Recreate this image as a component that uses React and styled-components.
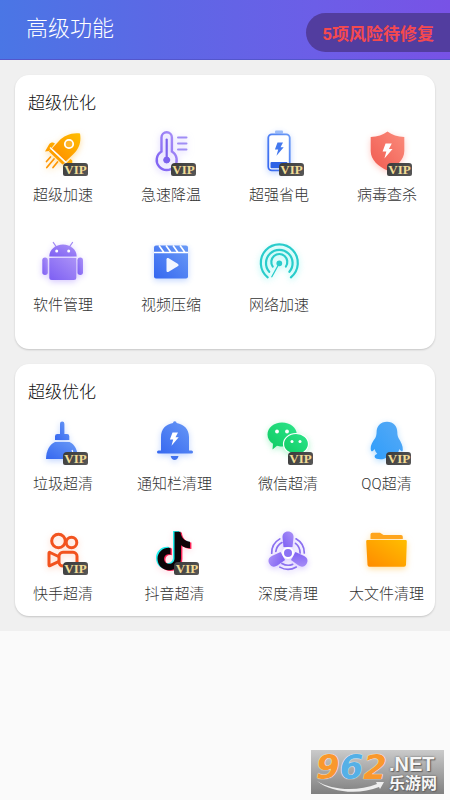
import React from 'react'
import styled, { createGlobalStyle } from 'styled-components'

const GlobalStyle = createGlobalStyle`
* {
    box-sizing: border-box;
}
body {
    margin: 0;
    background: #fafafa;
    font-family: Roboto, 'Noto Sans CJK SC', sans-serif;
    font-weight: 300;
}
`

const Page = styled.div`
position: relative;
min-height: 100vh;
`

const Header = styled.header`
display: flex;
justify-content: space-between;
align-items: flex-start;
padding: 13px 0 7px 26px;
background: linear-gradient(90deg, #4a76e5 0%, #5c68e5 35%, #6c5ee7 70%, #7852e6 100%);
border-bottom: 1px solid #5456cb;
`

const Title = styled.h1`
margin: 0;
font-size: 22px;
line-height: 32px;
font-weight: 300;
color: #fff;
`

const RiskButton = styled.button`
height: 39px;
padding: 0 16px;
border: 0;
border-radius: 20px 0 0 20px;
background: #523d9f;
color: #f5494f;
font-family: inherit;
font-size: 17px;
font-weight: 700;
`

const Content = styled.main`
display: flex;
flex-direction: column;
gap: 15px;
padding: 15px;
background: #f0f0f0;
`

const Card = styled.section`
padding: 15px 0 ${({ $bottom }) => $bottom}px;
border-radius: 14px;
background: #fff;
box-shadow: 0 1px 2px rgba(0, 0, 0, 0.18);
`

const CardTitle = styled.h2`
margin: 0 0 11px;
padding-left: 13px;
font-size: 17px;
line-height: 26px;
font-weight: 300;
color: #111;
`

const Grid = styled.div`
display: grid;
grid-template-columns: ${({ $columns }) => $columns};
justify-content: space-between;
justify-items: center;
row-gap: 32px;
padding: 0 ${({ $inset }) => $inset}px;
`

const Item = styled.button`
display: flex;
flex-direction: column;
align-items: center;
gap: 8px;
padding: 0;
border: 0;
background: none;
color: #333;
font-family: inherit;
font-size: 15px;
line-height: 20px;
font-weight: 300;
white-space: nowrap;
`

const IconBox = styled.span`
position: relative;
width: 50px;
height: 50px;
`

const Icon = styled.svg`
display: block;
width: 50px;
height: 50px;
overflow: visible;
filter: drop-shadow(0 2px 3px ${({ $glow }) => $glow});
`

const Vip = styled.span`
position: absolute;
right: 0;
bottom: 1px;
width: 25px;
height: 13px;
border-radius: 4px 3px 2px 2px;
background: linear-gradient(135deg, #3a3a3a, #585858);
color: #f3dc95;
font-family: 'Liberation Serif', serif;
font-size: 13px;
line-height: 13px;
font-weight: 700;
text-align: center;
`

const Gradients = styled.svg`
position: absolute;
width: 0;
height: 0;
`

const Watermark = styled.a`
position: absolute;
right: 6px;
bottom: 6px;
display: flex;
width: 133px;
height: 44px;
padding-left: 5px;
background: linear-gradient(#cacaca, #808080);
color: #f6f6f6;
text-decoration: none;
`

const Brand = styled.span`
display: flex;
flex-direction: column;
width: 73px;
`

const Digits = styled.span`
height: 31px;
color: #f9982d;
font-family: 'DejaVu Sans', sans-serif;
font-size: 34px;
line-height: 34px;
font-weight: 700;
font-style: italic;
text-shadow: 0 0 1px #fff, 0 0 1px #fff;
`

const Blue = styled.span`
color: #55b0e6;
`

const Swoosh = styled.svg`
width: 69px;
height: 12px;
`

const Domain = styled.span`
display: flex;
flex-direction: column;
padding-top: 3px;
font-family: 'Liberation Sans', 'Noto Sans CJK SC', sans-serif;
font-weight: 700;
text-shadow: 0 0 2px #555, 1px 1px 1px #666;
`

const Net = styled.span`
font-size: 20px;
line-height: 22px;
`

const SiteName = styled.span`
font-size: 16px;
line-height: 18px;
`

const bolt = 'M23.500 15.500h5.500l-2.500 4.800h3.200l-7.200 8.500 1.700-6.300h-3.300z'

const note = 'M25 5.500h6c.5 6 4 9.500 9.500 10v6.500c-3.500 0-6.500-1-9-3V32c0 8-6 12-12 12-6.500 0-11.500-5-11.500-11.500 0-7 6-12 13-11v6.700c-3.500-1-6.500 1-6.500 4.300 0 3 2.300 5 5 5 3.300 0 5.500-2 5.500-5.500z'

const icons = {
    rocket: {
        glow: '#ffc86099',
        art: (
            <>
                <path d="M42 6.500C33.500 5.500 26 8.500 20.500 14.500L14 21.500 27.500 34.500 35 27.500C41 21.500 43.500 15 42 6.500z" fill="url(#orange)" />
                <path d="M15 15.500c-2 0-3 .5-4 2L7 24.500l4-.4 6-7.500zM32.500 32l-5.500 5.500.5 4.500 4.500-2.500c2-1.200 2.500-3 2.300-6z" fill="url(#orange)" />
                <path d="M12.500 22 27 36l-2.500 1.500L11 24.500z" fill="#ffa000" />
                <path d="M12 20.500 28 35.500" stroke="#fff" strokeWidth="1.300" />
                <circle cx="31" cy="17" r="4.200" fill="#ffb52b" stroke="#fff" strokeWidth="1.800" />
                <path d="m12.500 30-4 4.500M16 32 8.800 40.500M19.500 35 15 40.500" stroke="#ff9500" strokeWidth="1.700" strokeLinecap="round" />
            </>
        ),
    },
    thermometer: {
        glow: '#a795ff88',
        art: (
            <g fill="none" stroke="url(#purple)" strokeLinecap="round">
                <path d="M15.500 24.500V10.500a5.200 5.200 0 0 1 10.400 0v14a10 10 0 1 1-10.400 0z" strokeWidth="2.400" />
                <path d="M20.700 12.500v20" stroke="#7c62ee" strokeWidth="2.200" />
                <circle cx="20.700" cy="33" r="3" fill="#7c62ee" stroke="#7c62ee" />
                <path d="M32 10.500h8.500M32 16.500h8.500M32 22.500h8.500" stroke="#a08df5" strokeWidth="2" />
            </g>
        ),
    },
    battery: {
        glow: '#7ba5ff77',
        art: (
            <>
                <rect x="21" y="3.500" width="8" height="3" rx="1" fill="#9cbcf8" />
                <rect x="14.300" y="7.300" width="21.400" height="36" rx="3.500" fill="#fff" stroke="url(#blue)" strokeWidth="1.800" />
                <rect x="16.500" y="35" width="17" height="6.300" rx="1" fill="#2f63e6" />
                <path d={bolt} fill="#4478ee" />
            </>
        ),
    },
    shield: {
        glow: '#ff8d8077',
        art: (
            <>
                <path d="M25.500 4.500c4.500 3.500 10 5 16.800 5.500V24c0 9-8 15.500-16.800 19.500C16.500 39.500 8.700 33 8.700 24V10C15.500 9.500 21 8 25.500 4.500z" fill="url(#red)" />
                <path d={bolt} fill="#fff" transform="translate(-3 -1) scale(1.13)" />
            </>
        ),
    },
    android: {
        glow: '#a78bff77',
        art: (
            <>
                <path d="M15.300 5.500l2.800 4M34.500 5.500l-2.800 4" stroke="#a28af5" strokeWidth="1.300" strokeLinecap="round" />
                <path d="M11.300 19.500a13.700 12 0 0 1 27.400 0z" fill="url(#purple)" />
                <path d="M11.300 21h27v19.500a2.500 2.500 0 0 1-2.500 2.500h-22a2.500 2.500 0 0 1-2.500-2.500z" fill="url(#purple)" />
                <rect x="4.300" y="20.500" width="5.500" height="17.500" rx="2.700" fill="url(#purple)" />
                <rect x="39.500" y="20.500" width="5.500" height="17.500" rx="2.700" fill="url(#purple)" />
                <circle cx="18.700" cy="14" r="1.500" fill="#fff" />
                <circle cx="30.700" cy="14" r="1.500" fill="#fff" />
            </>
        ),
    },
    video: {
        glow: '#7ba5ff77',
        art: (
            <>
                <rect x="8" y="8.500" width="34" height="33" rx="2" fill="url(#blue)" />
                <path d="M8 15.500h34M13 8.500l5 7M20 8.500l5 7M27 8.500l5 7M34 8.500l5 7" stroke="#fff" strokeWidth="1.600" />
                <path d="M20.500 22.500c0-1.500 1-2 2.200-1.300l9 5.500c1.200.8 1.200 1.800 0 2.600l-9 5.500c-1.200.7-2.200.2-2.200-1.300z" fill="#f2f6ff" />
            </>
        ),
    },
    network: {
        glow: '#5cf0ea99',
        art: (
            <g fill="none" stroke="#29cccb" strokeWidth="2.200" strokeLinecap="round">
                <path d="M13.700 40.300a18.500 18.500 0 1 1 23.200 0" />
                <path d="M15.200 34.800a13.300 13.300 0 1 1 20.200 0" />
                <path d="M18.700 29.500a8 8 0 1 1 13.200 0" />
                <path d="M25.300 26.300 17.800 39.800" strokeWidth="1.300" />
                <circle cx="25.300" cy="26.300" r="1.800" fill="#29cccb" />
            </g>
        ),
    },
    broom: {
        glow: '#7ba5ff77',
        art: (
            <>
                <path d="M22 7.800a2.200 2.200 0 0 1 4.400 0V18H29a2.300 2.300 0 0 1 2.300 2.300V24H17v-3.700A2.300 2.300 0 0 1 19.300 18H22z" fill="url(#blue)" />
                <path d="M17 26h14.500c5 2 8.500 8.500 8.500 17H8c0-8.500 4-15 9-17z" fill="url(#blue)" />
                <path d="M34 34c1 2 1.500 4 1.500 6.500" stroke="#fff" strokeWidth="1.200" fill="none" />
            </>
        ),
    },
    bell: {
        glow: '#7ba5ff77',
        art: (
            <>
                <path d="M24 7a1.800 1.800 0 0 1 3.600 0C35 8.500 40 13 40 21v13.500h2.500a1.500 1.500 0 0 1 0 3h-33a1.500 1.500 0 0 1 0-3H12V21c0-8 4.500-12.500 12-14z" fill="url(#blue)" />
                <path d="M21.700 40h7.800c-.5 2.500-2 4-3.900 4s-3.400-1.500-3.900-4z" fill="#4272ee" />
                <path d={bolt} fill="#fff" transform="translate(0 1)" />
            </>
        ),
    },
    wechat: {
        glow: '#5ce99a77',
        art: (
            <>
                <path d="M19 6.500c8.300 0 14.800 5.300 14.800 12S27.300 30.500 19 30.500c-2 0-3.500-.2-5-.7L9.500 33.500l.5-5.700c-3.500-2.200-5.500-5.500-5.500-9.300 0-6.700 6.300-12 14.500-12z" fill="url(#green)" />
                <path d="M33 17.500c7 0 12.500 4.700 12.500 10.500 0 3.300-1.700 6-4.500 8l.5 3.500-4-2c-1.500.4-3 .6-4.500.6-7 0-12.500-4.500-12.500-10.100S26 17.500 33 17.500z" fill="url(#green)" stroke="#fff" strokeWidth="1.200" />
                <g fill="#fff">
                    <circle cx="14" cy="15.500" r="1.900" />
                    <circle cx="24" cy="15.500" r="1.900" />
                    <circle cx="29" cy="25.500" r="1.500" />
                    <circle cx="37" cy="25.500" r="1.500" />
                </g>
            </>
        ),
    },
    qq: {
        glow: '#62b8ff77',
        art: (
            <path d="M26 5.700c6.500 0 10.300 4.300 10.300 10.300 0 2 .2 4 1.200 6 2.500 4 4.500 8 4.300 11.500 0 2.500-1 2.800-3.500-.5-.4 2-1.300 3.500-2.600 4.800 2 1 3 2 2.600 3.400-.4 1.600-4 2.200-7.300 1.900-2-.2-3.500-.8-5-1.600-1.500.8-3 1.500-5 1.700-3.500.3-7-.5-7.300-2.200-.3-1.500.8-2.400 2.600-3.200-1.300-1.300-2.200-2.800-2.600-4.800-2.500 3.300-3.900 3-4-.5C9.500 29 11.500 26 14.300 22c1-2 1.300-4 1.300-6C15.600 10 19.500 5.700 26 5.700z" fill="url(#sky)" />
        ),
    },
    kuaishou: {
        glow: '#ff9c7066',
        art: (
            <g fill="none" stroke="#f2531e" strokeWidth="3" strokeLinejoin="round">
                <circle cx="20.500" cy="15" r="6.800" />
                <circle cx="33.500" cy="16.500" r="5.300" />
                <rect x="21" y="26.300" width="18" height="13.700" rx="4" />
                <path d="M20.500 30.500 12 26.500c-.7-.3-1 0-1 .7v11.800c0 .7.300 1 1 .7l8.500-4" />
            </g>
        ),
    },
    douyin: {
        glow: '#ffb0c066',
        art: (
            <>
                <path d={note} fill="#22f0ee" transform="translate(-1 -.5)" />
                <path d={note} fill="#fb2558" transform="translate(1.900 1)" />
                <path d={note} fill="#0b0508" transform="translate(.5 .3)" />
            </>
        ),
    },
    fan: {
        glow: '#a78bff77',
        art: (
            <>
                {[0, 120, 240].map(angle => (
                    <g key={angle} transform={`rotate(${angle} 25 27)`}>
                        <path d="M25 5.500c3.500 0 5.800 2.500 5.500 6L29.500 21h-9l-1-9.500c-.3-3.500 2-6 5.500-6z" fill="url(#purple)" />
                        <path d="M33 12.800A16.300 16.300 0 0 1 41.300 27M32.500 17.300A12.200 12.200 0 0 1 37.100 27" fill="none" stroke="#8b70f0" strokeWidth="1.700" strokeLinecap="round" />
                    </g>
                ))}
                <circle cx="25" cy="27" r="5" fill="#8b73f5" stroke="#fff" strokeWidth="2" />
            </>
        ),
    },
    folder: {
        glow: '#ffc86099',
        art: (
            <>
                <path d="M9.500 13V8.500A1.800 1.800 0 0 1 11.300 6.700H19L22.500 9H40a1.800 1.800 0 0 1 1.800 1.800V13z" fill="#ffa51c" />
                <path d="M6.500 14h38a1.300 1.300 0 0 1 1.300 1.400l-.8 23.400a2 2 0 0 1-2 1.900H8.500a2 2 0 0 1-2-1.900L5.200 15.400A1.300 1.300 0 0 1 6.500 14z" fill="url(#orange)" />
            </>
        ),
    },
}

const boostItems = [
    { icon: 'rocket', label: '超级加速', vip: true },
    { icon: 'thermometer', label: '急速降温', vip: true },
    { icon: 'battery', label: '超强省电', vip: true },
    { icon: 'shield', label: '病毒查杀', vip: true },
    { icon: 'android', label: '软件管理' },
    { icon: 'video', label: '视频压缩' },
    { icon: 'network', label: '网络加速' },
]

const cleanItems = [
    { icon: 'broom', label: '垃圾超清', vip: true },
    { icon: 'bell', label: '通知栏清理' },
    { icon: 'wechat', label: '微信超清', vip: true },
    { icon: 'qq', label: 'QQ超清', vip: true },
    { icon: 'kuaishou', label: '快手超清', vip: true },
    { icon: 'douyin', label: '抖音超清', vip: true },
    { icon: 'fan', label: '深度清理' },
    { icon: 'folder', label: '大文件清理' },
]

const palette = [
    ['orange', '#ffbe00', '#ff8a00'],
    ['purple', '#ab92f7', '#7d5ff3'],
    ['blue', '#6a9af6', '#3567f0'],
    ['red', '#fb8c7c', '#f05a50'],
    ['green', '#2ce58a', '#0fca62'],
    ['sky', '#58aaf5', '#2e9dfb'],
]

function Feature({ icon, label, vip }) {
    return (
        <Item type="button">
            <IconBox>
                <Icon viewBox="0 0 50 50" aria-hidden="true" $glow={icons[icon].glow}>
                    {icons[icon].art}
                </Icon>
                {vip && <Vip>VIP</Vip>}
            </IconBox>
            {label}
        </Item>
    )
}

function FeatureCard({ title, items, columns, inset, bottom }) {
    return (
        <Card $bottom={bottom}>
            <CardTitle>{title}</CardTitle>
            <Grid $columns={columns} $inset={inset}>
                {items.map(item => <Feature key={item.label} {...item} />)}
            </Grid>
        </Card>
    )
}

export default function App() {
    return (
        <Page>
            <GlobalStyle />
            <Gradients aria-hidden="true">
                <defs>
                    {palette.map(([id, from, to]) => (
                        <linearGradient key={id} id={id} x1="1" y1="0" x2="0" y2="1">
                            <stop offset="0" stopColor={from} />
                            <stop offset="1" stopColor={to} />
                        </linearGradient>
                    ))}
                </defs>
            </Gradients>
            <Header>
                <Title>高级功能</Title>
                <RiskButton type="button">5项风险待修复</RiskButton>
            </Header>
            <Content>
                <FeatureCard title="超级优化" items={boostItems} columns="repeat(4, max-content)" inset={18} bottom={34} />
                <FeatureCard title="超级优化" items={cleanItems} columns="96fr 127fr 100fr 97fr" inset={0} bottom={12} />
            </Content>
            <Watermark href="#">
                <Brand>
                    <Digits>9<Blue>6</Blue>2</Digits>
                    <Swoosh viewBox="0 0 69 12" aria-hidden="true">
                        <path d="M1 0c14 9 40 11 60 3l-1-2 8 0-4 7-1-2C44 14 15 12 1 0z" fill="#eee" />
                    </Swoosh>
                </Brand>
                <Domain>
                    <Net>.NET</Net>
                    <SiteName>乐游网</SiteName>
                </Domain>
            </Watermark>
        </Page>
    )
}
